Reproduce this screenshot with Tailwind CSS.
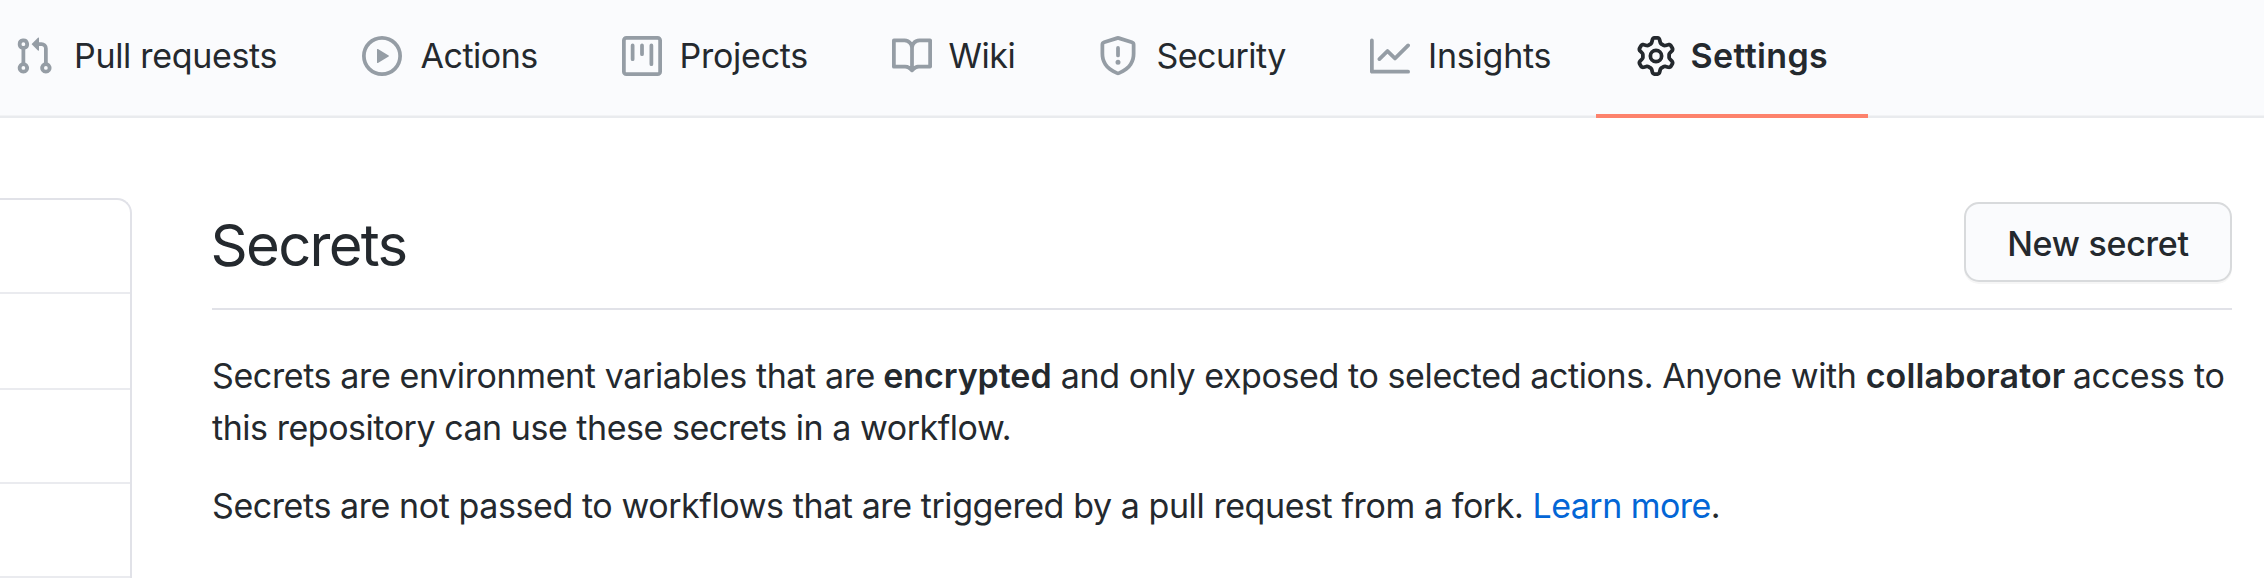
<!DOCTYPE html>
<html lang="en">
<head>
<meta charset="utf-8">
<title>Secrets</title>
<script src="https://cdn.jsdelivr.net/npm/@tailwindcss/browser@4"></script>
</head>
<body class="h-[578px] overflow-hidden bg-white font-['Inter',sans-serif] text-[34px] leading-[52px] whitespace-nowrap text-[#24292e]">
<nav class="flex h-[118px] bg-[#fafbfd] pl-[14px] shadow-[inset_0_-2px_0_#e9ebee,inset_0_-3px_0_#f2f3f5]">
  <a class="flex h-[112px] w-[348px] shrink-0 items-center gap-[20px]">
    <svg class="size-10 shrink-0 fill-[#959da5]" viewBox="0 0 16 16"><path fill-rule="evenodd" d="M7.177 3.073L9.573.677A.25.25 0 0110 .854v4.792a.25.25 0 01-.427.177L7.177 3.427a.25.25 0 010-.354zM3.75 2.5a.75.75 0 100 1.5.75.75 0 000-1.5zm-2.25.75a2.25 2.25 0 113 2.122v5.256a2.251 2.251 0 11-1.5 0V5.372A2.25 2.25 0 011.5 3.25zM11 2.5h-1V4h1a1 1 0 011 1v5.628a2.251 2.251 0 101.5 0V5A2.5 2.5 0 0011 2.5zm1 10.25a.75.75 0 111.5 0 .75.75 0 01-1.5 0zM3.75 12a.75.75 0 100 1.5.75.75 0 000-1.5z"/></svg>
    <span class="tracking-[-0.32px]">Pull requests</span>
  </a>
  <a class="flex h-[112px] w-[260px] shrink-0 items-center gap-[18.5px]">
    <svg class="size-10 shrink-0 fill-[#959da5]" viewBox="0 0 16 16"><path fill-rule="evenodd" d="M1.5 8a6.5 6.5 0 1113 0 6.5 6.5 0 01-13 0zM8 0a8 8 0 100 16A8 8 0 008 0zM6.379 5.227A.25.25 0 006 5.442v5.117a.25.25 0 00.379.214l4.264-2.559a.25.25 0 000-.428L6.379 5.227z"/></svg>
    <span class="tracking-[-0.48px]">Actions</span>
  </a>
  <a class="flex h-[112px] w-[270px] shrink-0 items-center gap-[17.5px]">
    <svg class="size-10 shrink-0 fill-[#959da5]" viewBox="0 0 16 16"><path fill-rule="evenodd" d="M1.75 0A1.75 1.75 0 000 1.75v12.5C0 15.216.784 16 1.75 16h12.5A1.75 1.75 0 0016 14.25V1.75A1.75 1.75 0 0014.25 0H1.75zM1.5 1.75a.25.25 0 01.25-.25h12.5a.25.25 0 01.25.25v12.5a.25.25 0 01-.25.25H1.75a.25.25 0 01-.25-.25V1.75zM11.75 3a.75.75 0 00-.75.75v7.5a.75.75 0 001.5 0v-7.5a.75.75 0 00-.75-.75zm-8.25.75a.75.75 0 011.5 0v5.5a.75.75 0 01-1.5 0v-5.5zM8 3a.75.75 0 00-.75.75v3.5a.75.75 0 001.5 0v-3.5A.75.75 0 008 3z"/></svg>
    <span class="tracking-[-0.25px]">Projects</span>
  </a>
  <a class="flex h-[112px] w-[206px] shrink-0 items-center gap-[16.5px]">
    <svg class="size-10 shrink-0 fill-[#959da5]" viewBox="0 0 16 16"><path fill-rule="evenodd" d="M0 1.75A.75.75 0 01.75 1h4.253c1.227 0 2.317.59 3 1.501A3.744 3.744 0 0111.006 1h4.245a.75.75 0 01.75.75v10.5a.75.75 0 01-.75.75h-4.507a2.25 2.25 0 00-1.591.659l-.622.621a.75.75 0 01-1.06 0l-.622-.621A2.25 2.25 0 005.258 13H.75a.75.75 0 01-.75-.75V1.75zm8.755 3a2.25 2.25 0 012.25-2.25H14.5v9h-3.757c-.71 0-1.4.201-1.992.572l.004-7.322zm-1.504 7.324l.004-5.073-.002-2.253A2.25 2.25 0 005.003 2.5H1.5v9h3.757a3.75 3.75 0 011.994.574z"/></svg>
    <span class="tracking-[-0.5px]">Wiki</span>
  </a>
  <a class="flex h-[112px] w-[272px] shrink-0 items-center gap-[18.5px]">
    <svg class="size-10 shrink-0 fill-[#959da5]" viewBox="0 0 16 16"><path fill-rule="evenodd" d="M7.467.133a1.75 1.75 0 011.066 0l5.25 1.68A1.75 1.75 0 0115 3.48V7c0 1.566-.32 3.182-1.303 4.682-.983 1.498-2.585 2.813-5.032 3.855a1.7 1.7 0 01-1.33 0c-2.447-1.042-4.049-2.357-5.032-3.855C1.32 10.182 1 8.566 1 7V3.48a1.75 1.75 0 011.217-1.667l5.25-1.68zm.61 1.429a.25.25 0 00-.153 0l-5.25 1.68a.25.25 0 00-.174.238V7c0 1.358.275 2.666 1.057 3.86.784 1.194 2.121 2.34 4.366 3.297a.2.2 0 00.154 0c2.245-.956 3.582-2.104 4.366-3.298C13.225 9.666 13.5 8.36 13.5 7V3.48a.25.25 0 00-.174-.237l-5.25-1.68zM9 10.5a1 1 0 11-2 0 1 1 0 012 0zm-.25-5.75a.75.75 0 10-1.5 0v3a.75.75 0 001.5 0v-3z"/></svg>
    <span class="tracking-[-0.55px]">Security</span>
  </a>
  <a class="flex h-[112px] w-[226px] shrink-0 items-center gap-[18px]">
    <svg class="size-10 shrink-0 fill-[#959da5]" viewBox="0 0 16 16"><path fill-rule="evenodd" d="M1.5 1.75a.75.75 0 00-1.5 0v12.5c0 .414.336.75.75.75h14.5a.75.75 0 000-1.5H1.5V1.75zm14.28 2.53a.75.75 0 00-1.06-1.06L10 7.94 7.53 5.47a.75.75 0 00-1.06 0L3.22 8.72a.75.75 0 001.06 1.06L7 7.06l2.47 2.47a.75.75 0 001.06 0l5.25-5.25z"/></svg>
    <span class="tracking-[-0.22px]">Insights</span>
  </a>
  <a class="flex h-[118px] w-[272px] shrink-0 items-center gap-[14.5px] border-b-4 border-[#fd826c] pb-[2px] pl-10 font-semibold">
    <svg class="size-10 shrink-0 fill-[#24292e]" viewBox="0 0 16 16"><path fill-rule="evenodd" d="M7.429 1.525a6.593 6.593 0 011.142 0c.036.003.108.036.137.146l.289 1.105c.147.56.55.967.997 1.189.174.086.341.183.501.29.417.278.97.423 1.53.27l1.102-.303c.11-.03.175.016.195.046.219.31.41.641.573.989.014.031.022.11-.059.19l-.815.806c-.411.406-.562.957-.53 1.456a4.588 4.588 0 010 .582c-.032.499.119 1.05.53 1.456l.815.806c.08.08.073.159.059.19a6.494 6.494 0 01-.573.99c-.02.029-.086.074-.195.045l-1.103-.303c-.559-.153-1.112-.008-1.529.27-.16.107-.327.204-.5.29-.449.222-.851.628-.998 1.189l-.289 1.105c-.029.11-.101.143-.137.146a6.613 6.613 0 01-1.142 0c-.036-.003-.108-.037-.137-.146l-.289-1.105c-.147-.56-.55-.967-.997-1.189a4.502 4.502 0 01-.501-.29c-.417-.278-.97-.423-1.53-.27l-1.102.303c-.11.03-.175-.016-.195-.046a6.492 6.492 0 01-.573-.989c-.014-.031-.022-.11.059-.19l.815-.806c.411-.406.562-.957.53-1.456a4.587 4.587 0 010-.582c.032-.499-.119-1.05-.53-1.456l-.815-.806c-.08-.08-.073-.159-.059-.19a6.44 6.44 0 01.573-.99c.02-.029.086-.075.195-.045l1.103.303c.559.153 1.112.008 1.529-.27.16-.107.327-.204.5-.29.449-.222.851-.628.998-1.189l.289-1.105c.029-.11.101-.143.137-.146zM8 0c-.236 0-.47.01-.701.03-.743.065-1.29.615-1.458 1.261l-.29 1.106c-.017.066-.078.158-.211.224a5.994 5.994 0 00-.668.386c-.123.082-.233.09-.3.071L3.27 2.776c-.644-.177-1.392.02-1.82.63a7.977 7.977 0 00-.704 1.217c-.315.675-.111 1.422.363 1.891l.815.806c.05.048.098.147.088.294a6.084 6.084 0 000 .772c.01.147-.038.246-.088.294l-.815.806c-.474.469-.678 1.216-.363 1.891.2.428.436.835.704 1.218.428.609 1.176.806 1.82.63l1.103-.303c.066-.019.176-.011.299.071.213.143.436.272.668.386.133.066.194.158.212.224l.289 1.106c.169.646.715 1.196 1.458 1.26a8.094 8.094 0 001.402 0c.743-.064 1.29-.614 1.458-1.26l.29-1.106c.017-.066.078-.158.211-.224a5.98 5.98 0 00.668-.386c.123-.082.233-.09.3-.071l1.102.302c.644.177 1.392-.02 1.82-.63.268-.382.505-.789.704-1.217.315-.675.111-1.422-.364-1.891l-.814-.806c-.05-.048-.098-.147-.088-.294a6.1 6.1 0 000-.772c-.01-.147.039-.246.088-.294l.814-.806c.475-.469.679-1.216.364-1.891a7.992 7.992 0 00-.704-1.218c-.428-.609-1.176-.806-1.82-.63l-1.103.303c-.066.019-.176.011-.299-.071a5.991 5.991 0 00-.668-.386c-.133-.066-.194-.158-.212-.224L10.16 1.29C9.99.645 9.444.095 8.701.031A8.094 8.094 0 008 0zm1.5 8a1.5 1.5 0 11-3 0 1.5 1.5 0 013 0zM11 8a3 3 0 11-6 0 3 3 0 016 0z"/></svg>
    <span class="tracking-[0.35px]">Settings</span>
  </a>
</nav>
<div class="flex">
  <aside class="mt-20 h-[400px] w-[132px] shrink-0 rounded-tr-[15px] border-t-2 border-r-2 border-[#e1e2e8]">
    <div class="h-[94px] border-b-2 border-[#eaebef]"></div>
    <div class="h-24 border-b-2 border-[#eaebef]"></div>
    <div class="h-[94px] border-b-2 border-[#eaebef]"></div>
    <div class="h-[94px] border-b-2 border-[#eaebef]"></div>
  </aside>
  <main class="mt-[82px] ml-20 w-[2020px] shrink-0">
    <header class="flex h-[110px] items-start justify-between border-b-2 border-[#e1e2e8]">
      <h1 class="-ml-[1.5px] text-[58px] leading-[90px] tracking-[-1.7px]">Secrets</h1>
      <button class="mt-[2px] h-20 w-[268px] rounded-[15px] border-2 border-[#d8dadc] bg-[#fafbfd] pt-[3px] font-medium tracking-[-0.26px] shadow-[0_2px_0_rgba(27,31,35,0.04)]">New secret</button>
    </header>
    <p class="mt-10"><span class="tracking-[-0.387px]">Secrets are environment variables that are </span><b class="-ml-[1px] font-semibold tracking-[-0.055px]">encrypted</b><span class="tracking-[-0.4px]"> and only exposed to selected actions. Anyone with </span><b class="font-semibold tracking-[0.125px]">collaborator</b><span class="-ml-[2px] tracking-[-0.288px]"> access to</span><br><span class="tracking-[-0.465px]">this repository can use these secrets in a workflow.</span></p>
    <p class="mt-[26px]"><span class="tracking-[-0.42px]">Secrets are not passed to workflows that are triggered by a pull request from a fork. </span><a class="tracking-[-0.55px] text-[#0366d6]">Learn more</a>.</p>
  </main>
</div>
</body>
</html>
